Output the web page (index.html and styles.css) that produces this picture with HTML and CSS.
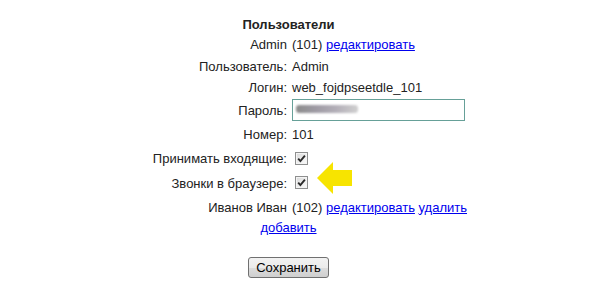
FILE: index.html
```html
<!DOCTYPE html>
<html lang="ru">
<head>
<meta charset="utf-8">
<title>Пользователи</title>
<link rel="stylesheet" href="styles.css">
</head>
<body>
<form class="form">
  <div class="title">Пользователи</div>

  <div class="row h22">
    <div class="label">Admin</div>
    <div class="value">(101)&nbsp;<a href="#">редактировать</a></div>
  </div>
  <div class="row h22">
    <div class="label">Пользователь:</div>
    <div class="value">Admin</div>
  </div>
  <div class="row h20">
    <div class="label">Логин:</div>
    <div class="value">web_fojdpseetdle_101</div>
  </div>
  <div class="row h26">
    <div class="label">Пароль:</div>
    <div class="value">
      <span class="pass">
        <input class="pass-input" type="password" aria-label="Пароль">
        <span class="pass-blur"></span>
      </span>
    </div>
  </div>
  <div class="row h23">
    <div class="label">Номер:</div>
    <div class="value">101</div>
  </div>
  <div class="row h25">
    <div class="label">Принимать входящие:</div>
    <div class="value">
      <label class="cb"><input type="checkbox" checked><svg class="cb-mark" viewBox="0 0 13 13"><path d="M3.2 6.6 L5.4 9.1 L9.9 3.6" /></svg></label>
    </div>
  </div>
  <div class="row h24">
    <div class="label">Звонки в браузере:</div>
    <div class="value">
      <label class="cb"><input type="checkbox" checked><svg class="cb-mark" viewBox="0 0 13 13"><path d="M3.2 6.6 L5.4 9.1 L9.9 3.6" /></svg></label>
      <svg class="arrow" viewBox="0 0 36 33" aria-hidden="true"><polygon points="0,16 16,0 16,8 35,8 35,24 16,24 16,32" /></svg>
    </div>
  </div>
  <div class="row h24">
    <div class="label">Иванов Иван</div>
    <div class="value">(102)&nbsp;<a href="#">редактировать</a>&nbsp;<a href="#">удалить</a></div>
  </div>
  <div class="add"><a href="#">добавить</a></div>
  <div class="actions"><button type="button" class="btn">Сохранить</button></div>
</form>
</body>
</html>
```
FILE: styles.css
```css
html, body {
  margin: 0;
  padding: 0;
  background: #ffffff;
}
body {
  font-family: "Liberation Sans", Arial, sans-serif;
  font-size: 13px;
  color: #222222;
}
a {
  color: #0000ee;
  text-decoration: underline;
}
.form {
  width: 577px;
  padding-top: 15px;
  margin: 0;
}
.title {
  height: 18px;
  display: flex;
  align-items: center;
  justify-content: center;
  font-weight: bold;
}
.row {
  display: flex;
  align-items: center;
  gap: 5px;
}
.h20 { height: 20px; }
.h22 { height: 22px; }
.h23 { height: 23px; }
.h24 { height: 24px; }
.h25 { height: 25px; }
.h26 { height: 26px; }
.label {
  flex: 0 0 287px;
  text-align: right;
  white-space: nowrap;
}
.value {
  display: flex;
  align-items: center;
  position: relative;
  white-space: nowrap;
}
.pass {
  position: relative;
  display: block;
  width: 173px;
  height: 22px;
}
.pass-input {
  display: block;
  box-sizing: border-box;
  width: 173px;
  height: 22px;
  margin: 0;
  padding: 1px 3px;
  border: 1px solid #66a098;
  background: #ffffff;
  outline: none;
  font: inherit;
}
.pass-blur {
  position: absolute;
  left: 4px;
  top: 6px;
  width: 62px;
  height: 8px;
  border-radius: 3px;
  background: linear-gradient(to right, #8c8c8c 0%, #a09ca6 35%, #b3afb8 65%, #d0d0d0 100%);
  filter: blur(1.3px);
  pointer-events: none;
}
.cb {
  position: relative;
  display: block;
  width: 13px;
  height: 13px;
  margin: 0 0 1px 3px;
}
.cb input {
  appearance: none;
  -webkit-appearance: none;
  display: block;
  box-sizing: border-box;
  width: 13px;
  height: 13px;
  margin: 0;
  border: 1px solid #8e8f8f;
  background: linear-gradient(135deg, #d6d6d6 0%, #ececec 50%, #fbfbfb 100%);
  box-shadow: inset 0 0 0 1px #f4f4f4;
}
.cb-mark {
  position: absolute;
  left: 0;
  top: 0;
  width: 13px;
  height: 13px;
  pointer-events: none;
}
.cb-mark path {
  fill: none;
  stroke: #2a2a2a;
  stroke-width: 1.9;
}
.arrow {
  position: absolute;
  left: 25px;
  top: -14px;
  width: 36px;
  height: 33px;
}
.arrow polygon {
  fill: #f7e400;
}
.add {
  height: 16px;
  display: flex;
  align-items: center;
  justify-content: center;
}
.actions {
  display: flex;
  justify-content: center;
  margin-top: 22px;
}
.btn {
  box-sizing: border-box;
  height: 21px;
  width: 81px;
  padding: 0 6px;
  margin: 0;
  font: inherit;
  color: #000000;
  border: 1px solid #707070;
  border-radius: 3px;
  background: linear-gradient(to bottom, #f2f2f2 0%, #ebebeb 50%, #dddddd 51%, #cfcfcf 100%);
}
```
